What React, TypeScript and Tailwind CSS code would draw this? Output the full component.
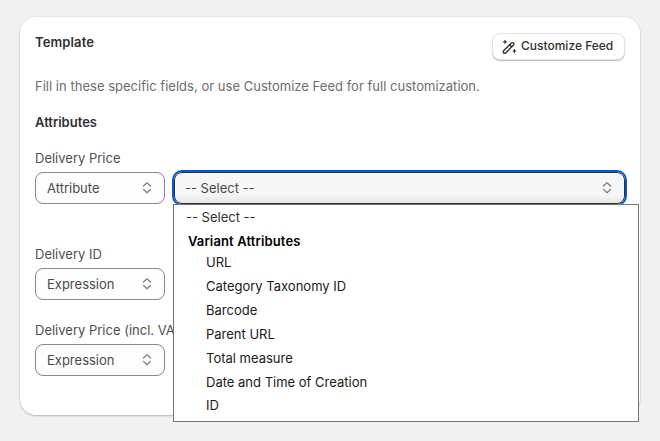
const fieldBox = "flex h-8 w-[130px] shrink-0 items-center justify-between rounded-lg border border-[#8a8a8a] bg-[#fdfdfd] pr-[9px] pl-[11px] text-[13px] text-[#4a4a4a]";

const Chevrons = () => (
  <svg width="16" height="16" viewBox="0 0 16 16" fill="none" stroke="#7d7d7d" strokeWidth="1.3" strokeLinecap="round" strokeLinejoin="round">
    <path d="M4.5 6 8 2.6 11.5 6" />
    <path d="M4.5 9.4 8 12.8 11.5 9.4" />
  </svg>
);

const WandIcon = () => (
  <svg width="16" height="16" viewBox="0 0 16 16" fill="none" stroke="#303030" strokeWidth="1.4" strokeLinecap="round" strokeLinejoin="round">
    <path d="M2.6 11.8 10.4 4a1.4 1.4 0 0 1 2 0l.1.1a1.4 1.4 0 0 1 0 2L4.7 13.9a1.4 1.4 0 0 1-2 0l-.1-.1a1.4 1.4 0 0 1 0-2Z" />
    <path d="m8.6 5.8 2 2" />
    <path d="M4 1.4v2.8M2.6 2.8h2.8" strokeWidth="1.2" />
    <path d="M13.4 10.6v2.8M12 12h2.8" strokeWidth="1.2" />
  </svg>
);

const options = ["URL", "Category Taxonomy ID", "Barcode", "Parent URL", "Total measure", "Date and Time of Creation"];

const Field = ({ label, value, className }: { label: string; value: string; className: string }) => (
  <div className={className}>
    <div className="mb-[5px] h-[18px] whitespace-nowrap text-[13px] leading-[18px] text-[#4f4f4f]">{label}</div>
    <div className={fieldBox}>
      <span className="relative top-px">{value}</span>
      <Chevrons />
    </div>
  </div>
);

export default function App() {
  return (
    <div className="relative h-[441px] w-[660px] overflow-hidden bg-[#f1f1f1] pt-[17px] pl-5 font-['Inter',sans-serif]">
      <div className="h-[398px] w-[620px] rounded-2xl bg-white px-[15px] pt-[16px] shadow-[0_1px_2px_rgba(0,0,0,0.22),0_0_0_1px_rgba(0,0,0,0.03)]">
        <div className="flex h-[28px] items-start justify-between">
          <h2 className="-mt-px text-[13px] leading-5 font-semibold tracking-[0.01em] text-[#303030]">Template</h2>
          <button className="flex h-[27px] w-[133px] items-center gap-1 rounded-lg border border-[#e3e3e3] bg-white pl-[8px] text-[12px] font-medium text-[#303030] shadow-[0_1px_1px_rgba(0,0,0,0.25)]">
            <WandIcon />
            <span className="relative -top-px">Customize Feed</span>
          </button>
        </div>
        <p className="mt-[15px] text-[13px] leading-5 tracking-[0.0015em] text-[#6d6d6d]">Fill in these specific fields, or use Customize Feed for full customization.</p>
        <h3 className="mt-[16px] text-[13px] leading-5 font-semibold text-[#303030]">Attributes</h3>
        <Field label="Delivery Price" value="Attribute" className="mt-[17px]" />
        <Field label="Delivery ID" value="Expression" className="mt-[41px]" />
        <Field label="Delivery Price (incl. VAT)" value="Expression" className="mt-[21px]" />
      </div>

      <div className="absolute top-[172px] left-[174px] flex h-8 w-[451px] items-center justify-between rounded-lg border border-[#303030] bg-gradient-to-b from-[#f7f7f7] from-70% to-[#e6e6e6] pr-[9px] pl-[11px] text-[13px] text-[#4a4a4a] outline-2 outline-offset-0 outline-[#005bd3]">
        <span className="relative top-px -left-px">-- Select --</span>
        <Chevrons />
      </div>

      <div className="absolute top-[204px] left-[173px] h-[218px] w-[466px] border border-[#767676] bg-white pt-[2px] text-[13px] text-[#1a1a1a]">
        <div className="h-[21px] pl-3 leading-5 text-[#303030]">-- Select --</div>
        <div className="h-[22px] pl-[14px] leading-[26px] font-semibold tracking-[0.01em] text-black">Variant Attributes</div>
        {options.map((o) => (
          <div key={o} className="h-6 pl-8 leading-6">{o}</div>
        ))}
        <div className="h-[22px] pl-8 leading-[22px]">ID</div>
      </div>
    </div>
  );
}
